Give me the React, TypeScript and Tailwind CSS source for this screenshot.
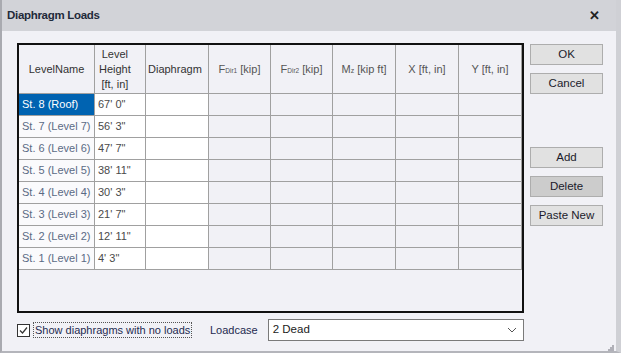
import React from "react";

const rows = [
  { name: "St. 8 (Roof)", height: "67' 0\"" },
  { name: "St. 7 (Level 7)", height: "56' 3\"" },
  { name: "St. 6 (Level 6)", height: "47' 7\"" },
  { name: "St. 5 (Level 5)", height: "38' 11\"" },
  { name: "St. 4 (Level 4)", height: "30' 3\"" },
  { name: "St. 3 (Level 3)", height: "21' 7\"" },
  { name: "St. 2 (Level 2)", height: "12' 11\"" },
  { name: "St. 1 (Level 1)", height: "4' 3\"" },
];

const DialogButton = ({ label, pressed }: { label: string; pressed?: boolean }) => (
  <button
    className={`h-[21px] w-[73px] border border-[#adadad] text-[11.5px] text-[#1b1b2b] ${
      pressed ? "bg-[#cccccc]" : "bg-[#e1e1e1]"
    }`}
  >
    {label}
  </button>
);

const HeaderCell = ({ children, className = "" }: { children: React.ReactNode; className?: string }) => (
  <div className={`flex items-center whitespace-nowrap border-b border-r border-[#a0a0a0] text-[11px] leading-[15px] ${className}`}>
    {children}
  </div>
);

export default function App() {
  return (
    <div
      className="flex h-[353px] w-[621px] flex-col border-l-2 border-r-[5px] border-b-2 border-l-[#a9aab0] border-r-[#cfd0d5] border-b-[#b4b5bb] bg-[#d2d3d8]"
      style={{ fontFamily: '"Liberation Sans", Arial, sans-serif' }}
    >
      <div className="flex h-[31px] shrink-0 items-center justify-between pl-[5px] pr-[16px]">
        <span className="text-[11.5px] font-bold tracking-[-0.3px] text-[#1f2a3a]">Diaphragm Loads</span>
        <span className="text-[13px] font-bold text-[#222]">✕</span>
      </div>

      <div className="flex flex-1 flex-col bg-[#f1f1f6] pl-[15px] pr-[13px] pt-[12px]">
        <div className="flex gap-[6px]">
          <div className="h-[270px] w-[507px] border-2 border-[#111]">
            <div className="grid grid-cols-[76px_51px_63px_62px_62px_63px_63px_63px]">
              <HeaderCell className="h-[49px] justify-center text-[#333]">LevelName</HeaderCell>
              <HeaderCell className="h-[49px] pl-[4px] text-[#333]">
                <span className="text-center">
                  Level
                  <br />
                  Height
                  <br />
                  [ft, in]
                </span>
              </HeaderCell>
              <HeaderCell className="h-[49px] pl-[2px] text-[#333]">Diaphragm</HeaderCell>
              <HeaderCell className="h-[49px] justify-center text-[#555]">
                F<sub className="text-[6.5px]">Dir1</sub>&nbsp;[kip]
              </HeaderCell>
              <HeaderCell className="h-[49px] justify-center text-[#555]">
                F<sub className="text-[6.5px]">Dir2</sub>&nbsp;[kip]
              </HeaderCell>
              <HeaderCell className="h-[49px] justify-center text-[#555]">
                M<sub className="text-[7px]">z</sub>&nbsp;[kip ft]
              </HeaderCell>
              <HeaderCell className="h-[49px] justify-center text-[#555]">X [ft, in]</HeaderCell>
              <HeaderCell className="h-[49px] justify-center text-[#555]">Y [ft, in]</HeaderCell>

              {rows.map((r, i) => (
                <React.Fragment key={r.name}>
                  <div
                    className={`flex h-[22px] items-center whitespace-nowrap border-b border-r border-[#a0a0a0] pl-[3px] text-[11px] ${
                      i === 0 ? "bg-[#0063b1] text-white" : "bg-[#fafafc] text-[#5a6a85]"
                    }`}
                  >
                    {r.name}
                  </div>
                  <div className="flex h-[22px] items-center whitespace-nowrap border-b border-r border-[#a0a0a0] bg-white pl-[3px] text-[11px] text-[#4a4a4a]">
                    {r.height}
                  </div>
                  <div className="h-[22px] border-b border-r border-[#a0a0a0] bg-white" />
                  <div className="h-[22px] border-b border-r border-[#a0a0a0]" />
                  <div className="h-[22px] border-b border-r border-[#a0a0a0]" />
                  <div className="h-[22px] border-b border-r border-[#a0a0a0]" />
                  <div className="h-[22px] border-b border-r border-[#a0a0a0]" />
                  <div className="h-[22px] border-b border-r border-[#a0a0a0]" />
                </React.Fragment>
              ))}
            </div>
          </div>

          <div className="flex flex-col pt-[1px]">
            <div className="flex flex-col gap-[8px]">
              <DialogButton label="OK" />
              <DialogButton label="Cancel" />
            </div>
            <div className="mt-[53px] flex flex-col gap-[8px]">
              <DialogButton label="Add" />
              <DialogButton label="Delete" pressed />
              <DialogButton label="Paste New" />
            </div>
          </div>
        </div>

        <div className="mt-[6px] flex h-[22px] items-center">
          <div className="flex w-[172px] items-center">
            <span className="flex h-[13px] w-[13px] items-center justify-center border border-[#333] bg-white">
              <svg width="11" height="11" viewBox="0 0 11 11">
                <path d="M2 5.5 L4.5 8 L9 2.5" fill="none" stroke="#333" strokeWidth="1.2" />
              </svg>
            </span>
            <span className="ml-[3px] whitespace-nowrap border border-dotted border-[#555] px-[1px] text-[11px] leading-[14px] text-[#1e2a50]">
              Show diaphragms with no loads
            </span>
          </div>
          <span className="ml-[21px] text-[11px] text-[#1e2a50]">Loadcase</span>
          <div className="ml-[10px] flex h-[22px] w-[256px] items-center justify-between border border-[#7a7a7a] bg-white pl-[4px] pr-[6px] text-[11.5px] text-[#1b1b1b]">
            <span>2 Dead</span>
            <svg width="10" height="6" viewBox="0 0 10 6">
              <path d="M1 1 L5 5 L9 1" fill="none" stroke="#555" strokeWidth="1" />
            </svg>
          </div>
        </div>

        <div className="flex flex-1 items-end justify-end">
          <svg width="6" height="6" viewBox="0 0 6 6" className="mr-[-11px]">
            <rect x="4" y="0" width="2" height="2" fill="#b0b0b8" />
            <rect x="2" y="2" width="2" height="2" fill="#b0b0b8" />
            <rect x="4" y="2" width="2" height="2" fill="#b0b0b8" />
            <rect x="0" y="4" width="2" height="2" fill="#b0b0b8" />
            <rect x="2" y="4" width="2" height="2" fill="#b0b0b8" />
            <rect x="4" y="4" width="2" height="2" fill="#b0b0b8" />
          </svg>
        </div>
      </div>
    </div>
  );
}
